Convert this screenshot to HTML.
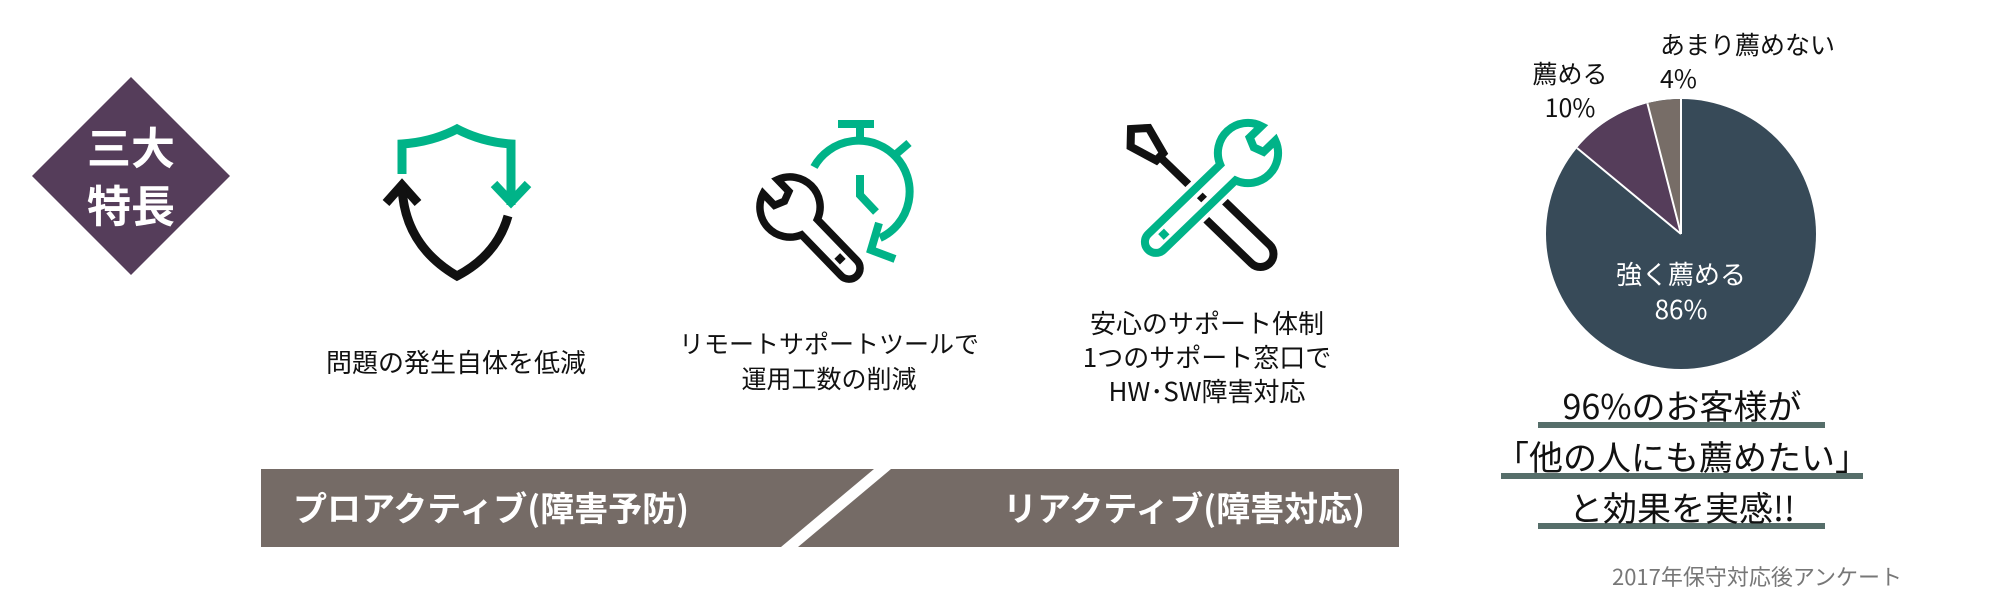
<!DOCTYPE html>
<html><head><meta charset="utf-8"><style>
html,body{margin:0;padding:0;background:#fff;}
body{width:2000px;height:600px;position:relative;overflow:hidden;font-family:"Noto Sans CJK JP","Liberation Sans",sans-serif;color:#111;}
.t{position:absolute;text-align:center;white-space:nowrap;}
svg{position:absolute;left:0;top:0;}
</style></head><body>
<svg width="2000" height="600" viewBox="0 0 2000 600">
  <polygon points="131,77 230,176 131,275 32,176" fill="#553d5a"/>
  <g fill="none" stroke-width="9" stroke-linejoin="miter">
    <path d="M402,174 L402,144 Q432,142 457,129 Q482,142 511,144 L511,205" stroke="#00b388"/>
    <path d="M494,184 L511,202 L528,184" stroke="#00b388"/>
    <path d="M386,203 L402,185 L418,203" stroke="#111"/>
    <path d="M402,186 Q404,245 457,276 Q497,255 508,216" stroke="#111"/>
  </g>
  <g fill="none" stroke-width="8">
    <path d="M814,167 A51,51 0 1 1 880,238" stroke="#00b388"/>
    <path d="M879,223 L871,250 L895,259" stroke="#00b388"/>
    <path d="M860,126 L860,140 M838,124 L874,124" stroke="#00b388"/>
    <path d="M895,155 L909,143" stroke="#00b388"/>
    <path d="M860,175 L860,195 L876,212" stroke="#00b388"/>
    <g transform="translate(790,207) rotate(46)">
      <path d="M85,-11 L28,-11 A30,30 0 0 0 -28.3,-10 L-12,-10 L-8,0 L-12,10 L-28.3,10 A30,30 0 0 0 28,11 L85,11 A11,11 0 0 0 85,-11 Z" stroke="#111" stroke-width="7.5"/>
      <rect x="68" y="-4" width="8" height="8" fill="#111" stroke="none"/>
    </g>
  </g>
  <g transform="translate(1131,129) rotate(44)" fill="none" stroke="#111" stroke-width="8">
    <path d="M0,0 L12,-13 L40,-5 L40,5 L12,13 Z"/>
    <path d="M40,0 L112,0"/>
    <path d="M112,-22 L112,22"/>
    <path d="M112,-13 L180,-13 A13,13 0 0 1 180,13 L112,13"/>
  </g>
  <g transform="translate(1248,153) rotate(136)" fill="none">
    <path d="M128,-11 L28,-11 A30,30 0 0 0 -28.3,-10 L-12,-10 L-8,0 L-12,10 L-28.3,10 A30,30 0 0 0 28,11 L128,11 A11,11 0 0 0 128,-11 Z" stroke="#fff" stroke-width="16"/>
    <path d="M128,-11 L28,-11 A30,30 0 0 0 -28.3,-10 L-12,-10 L-8,0 L-12,10 L-28.3,10 A30,30 0 0 0 28,11 L128,11 A11,11 0 0 0 128,-11 Z" stroke="#00b388" stroke-width="8"/>
    <rect x="113" y="-4" width="8" height="8" fill="#00b388"/>
  </g>
  <rect x="261" y="469" width="1138" height="78" fill="#756b66"/>
  <polygon points="874,469 891,469 798,547 781,547" fill="#fff"/>
  <circle cx="1681" cy="234" r="135" fill="#374a58"/>
  <path d="M1681,234 L1681,99 A135,135 0 0 0 1647.4,103.2 Z" fill="#776d67"/>
  <path d="M1681,234 L1647.4,103.2 A135,135 0 0 0 1577,148 Z" fill="#553d5a"/>
  <path d="M1681,234 L1681,99 M1681,234 L1647.4,103.2 M1681,234 L1577,148" stroke="#fff" stroke-width="2"/>
  <rect x="1538" y="422" width="287" height="6" fill="#566e6a"/>
  <rect x="1501" y="473" width="362" height="6" fill="#566e6a"/>
  <rect x="1538" y="523" width="287" height="6" fill="#566e6a"/>
</svg>
<div class="t" style="left:31px;width:200px;top:116px;font-size:44px;line-height:58px;font-weight:bold;color:#fff;">三大<br>特長</div>
<div class="t" style="left:306px;width:300px;top:344px;font-size:26px;line-height:36px;">問題の発生自体を低減</div>
<div class="t" style="left:679px;width:300px;top:326px;font-size:25px;line-height:35px;">リモートサポートツールで<br>運用工数の削減</div>
<div class="t" style="left:1057px;width:300px;top:306px;font-size:26px;line-height:34px;">安心のサポート体制<br>1つのサポート窓口で<br>HW･SW障害対応</div>
<div class="t" style="left:293px;top:485px;font-size:34px;line-height:44px;font-weight:bold;color:#fff;text-align:left;">プロアクティブ(障害予防)</div>
<div class="t" style="left:1003px;top:485px;font-size:34px;line-height:44px;font-weight:bold;color:#fff;text-align:left;">リアクティブ(障害対応)</div>
<div class="t" style="left:1660px;top:26px;font-size:25px;line-height:36px;text-align:left;">あまり薦めない</div>
<div class="t" style="left:1660px;top:60px;font-size:25px;line-height:36px;text-align:left;">4%</div>
<div class="t" style="left:1520px;top:56px;font-size:25px;line-height:34px;width:100px;">薦める<br>10%</div>
<div class="t" style="left:1581px;top:256px;font-size:26px;line-height:35px;width:200px;color:#fff;">強く薦める<br>86%</div>
<div class="t" style="left:1482px;top:379px;font-size:34px;line-height:51px;width:400px;">96%のお客様が<br>「他の人にも薦めたい」<br>と効果を実感!!</div>
<div class="t" style="left:1612px;top:561px;font-size:22px;line-height:30px;color:#777;text-align:left;">2017年保守対応後アンケート</div>
</body></html>
